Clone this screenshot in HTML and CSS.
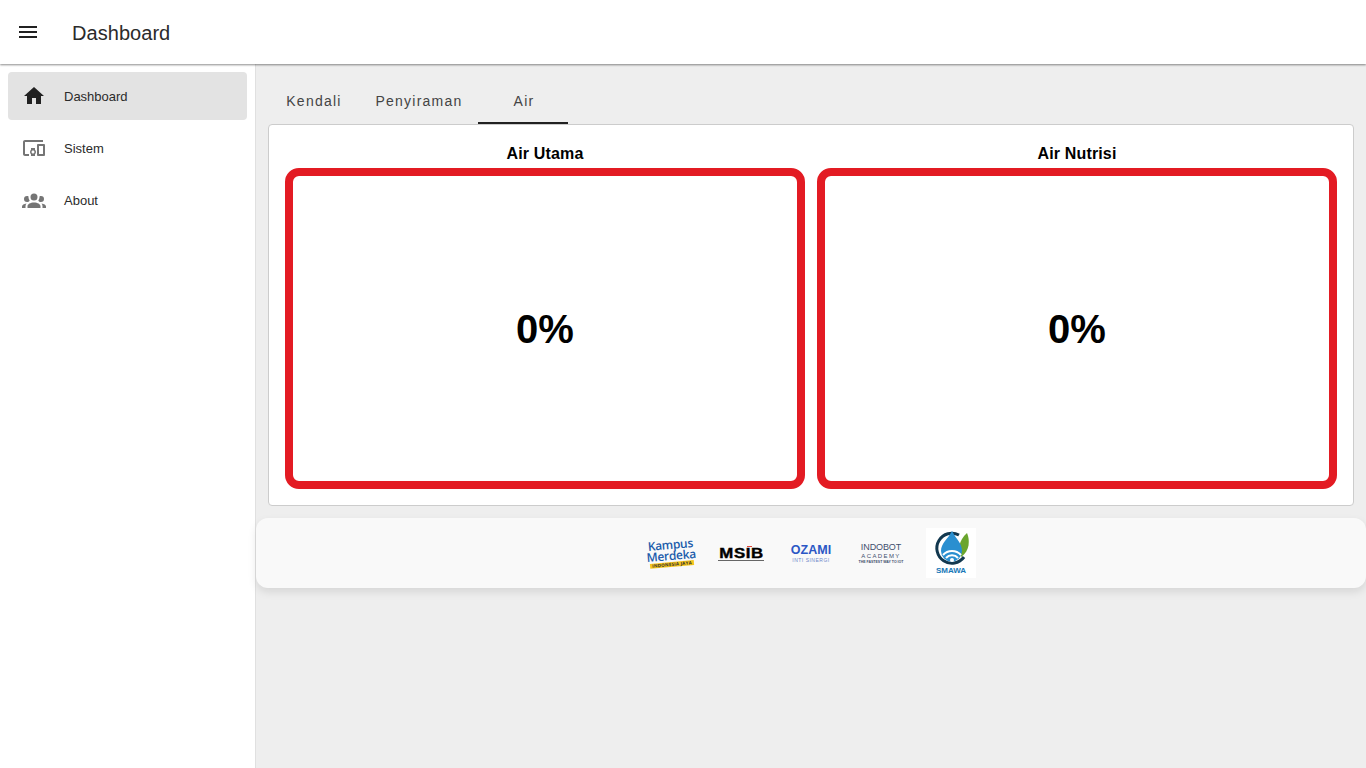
FILE: index.html
```html
<!DOCTYPE html>
<html lang="en">
<head>
  <meta charset="UTF-8" />
  <meta name="viewport" content="width=device-width, initial-scale=1.0" />
  <title>Dashboard</title>
  <link rel="stylesheet" href="styles.css">
</head>
<body>
  <header class="topbar">
    <svg class="menu-icon" viewBox="0 0 24 24" width="24" height="24"><path d="M3 18h18v-2H3v2zm0-5h18v-2H3v2zm0-7v2h18V6H3z"/></svg>
    <div class="topbar-title">Dashboard</div>
  </header>

  <div class="layout">
    <nav class="sidebar">
      <a class="nav-item active">
        <svg class="nav-icon" viewBox="0 0 24 24" width="24" height="24"><path d="M10 20v-6h4v6h5v-8h3L12 3 2 12h3v8z"/></svg>
        <span>Dashboard</span>
      </a>
      <a class="nav-item">
        <svg class="nav-icon" viewBox="0 0 24 24" width="24" height="24"><path d="M3 6h18V4H3c-1.100 0-2 .9-2 2v12c0 1.100.9 2 2 2h4v-2H3V6zm10 6H9v1.780c-.61.55-1 1.330-1 2.220s.39 1.670 1 2.220V20h4v-1.780c.61-.55 1-1.340 1-2.220s-.39-1.670-1-2.220V12zm-2 5.500c-.83 0-1.500-.67-1.500-1.500s.67-1.500 1.500-1.500 1.500.67 1.500 1.500-.67 1.500-1.500 1.500zM22 8h-6c-.5 0-1 .5-1 1v10c0 .5.500 1 1 1h6c.5 0 1-.5 1-1V9c0-.5-.5-1-1-1zm-1 10h-4v-8h4v8z"/></svg>
        <span>Sistem</span>
      </a>
      <a class="nav-item">
        <svg class="nav-icon" viewBox="0 0 24 24" width="24" height="24"><path d="M12 5.500A3.500 3.500 0 0 1 15.500 9 3.500 3.500 0 0 1 12 12.500 3.500 3.500 0 0 1 8.500 9 3.500 3.500 0 0 1 12 5.500M5 8c.56 0 1.080.15 1.530.42-.15 1.430.27 2.850 1.130 3.960C7.160 13.340 6.160 14 5 14a3 3 0 0 1-3-3 3 3 0 0 1 3-3m14 0a3 3 0 0 1 3 3 3 3 0 0 1-3 3c-1.160 0-2.160-.66-2.660-1.620.86-1.110 1.280-2.530 1.130-3.960.45-.27.97-.42 1.530-.42M5.500 18.250c0-2.070 2.910-3.750 6.500-3.750s6.500 1.680 6.500 3.750V20h-13v-1.750M0 20v-1.500c0-1.390 1.890-2.560 4.450-2.900-.59.68-.95 1.620-.95 2.650V20H0m24 0h-3.500v-1.750c0-1.030-.36-1.970-.95-2.650 2.560.34 4.450 1.510 4.450 2.900V20z"/></svg>
        <span>About</span>
      </a>
    </nav>

    <main class="content">
      <div class="tabs">
        <div class="tab tab-short">Kendali</div>
        <div class="tab tab-long">Penyiraman</div>
        <div class="tab tab-short tab-active">Air</div>
      </div>

      <section class="card">
        <div class="gauge">
          <div class="gauge-title">Air Utama</div>
          <div class="gauge-box">0%</div>
        </div>
        <div class="gauge">
          <div class="gauge-title">Air Nutrisi</div>
          <div class="gauge-box">0%</div>
        </div>
      </section>

      <footer class="partners">
        <div class="logo logo-kampus">
          <div class="km-line">Kampus</div>
          <div class="km-line">Merdeka</div>
          <div class="km-strip">INDONESIA JAYA</div>
        </div>
        <div class="logo logo-msib">
          <div class="msib-flag"></div>
          <div class="msib-mark">MSIB</div>
          <div class="msib-rule"></div>
        </div>
        <div class="logo logo-ozami">
          <div class="ozami-name">OZAMI</div>
          <div class="ozami-sub">INTI SINERGI</div>
        </div>
        <div class="logo logo-indobot">
          <div class="indobot-name">INDOBOT</div>
          <div class="indobot-sub">ACADEMY</div>
          <div class="indobot-tag">THE FASTEST WAY TO IOT</div>
        </div>
        <div class="logo logo-smawa">
          <svg viewBox="0 0 50 50" width="50" height="50">
            <path d="M33 7a15 15 0 1 0 5 22" fill="none" stroke="#12384f" stroke-width="3"/>
            <path d="M35 29c-3-7-3-16 6-24 3 7 3 18-6 24z" fill="#6aa52d"/>
            <path d="M26 3c4 8 10 12 10 20a10.500 10.500 0 0 1-21 0c0-8 7-12 11-20z" fill="#2a8fd0"/>
            <path d="M17 27a12 12 0 0 1 18 0M20 30a8 8 0 0 1 12 0" fill="none" stroke="#fff" stroke-width="2"/>
            <circle cx="26" cy="32" r="2" fill="#fff"/>
            <text x="25" y="45" text-anchor="middle" class="smawa-text">SMAWA</text>
          </svg>
        </div>
      </footer>
    </main>
  </div>
</body>
</html>
```

FILE: styles.css
```css
* {
  box-sizing: border-box;
}
body {
  margin: 0;
  height: 768px;
  overflow: hidden;
  background-color: #eeeeee;
  color: #2b2b2b;
  font-family: 'Liberation Sans', Arial, sans-serif;
}
.topbar {
  position: relative;
  z-index: 2;
  height: 64px;
  padding-left: 16px;
  display: flex;
  align-items: center;
  background-color: white;
  box-shadow: 0 1px 2px rgba(0, 0, 0, 0.45);
}
.menu-icon {
  fill: #212121;
}
.topbar-title {
  margin-left: 32px;
  padding-top: 2px;
  font-size: 20px;
  letter-spacing: 0.05px;
}
.layout {
  display: flex;
  height: 704px;
}
.sidebar {
  width: 256px;
  flex-shrink: 0;
  padding: 8px;
  display: flex;
  flex-direction: column;
  gap: 4px;
  background-color: white;
  border-right: 1px solid #e0e0e0;
}
.nav-item {
  height: 48px;
  padding-left: 14px;
  display: flex;
  align-items: center;
  gap: 18px;
  border-radius: 4px;
  font-size: 13px;
}
.nav-item.active {
  background-color: #e3e3e3;
}
.nav-icon {
  fill: #757575;
}
.active .nav-icon {
  fill: #212121;
}
.content {
  flex: 1;
  min-width: 0;
  display: flex;
  flex-direction: column;
}
.tabs {
  height: 60px;
  margin-left: 12px;
  display: flex;
  align-items: flex-end;
}
.tab {
  height: 46px;
  padding: 2px 0 0 2px;
  display: flex;
  align-items: center;
  justify-content: center;
  border-bottom: 2px solid transparent;
  font-size: 14px;
  letter-spacing: 1.25px;
  color: #444444;
}
.tab-short {
  width: 90px;
}
.tab-long {
  width: 120px;
}
.tab-active {
  border-bottom-color: #212121;
}
.card {
  height: 382px;
  padding: 16px;
  display: flex;
  gap: 12px;
  margin: 0 12px;
  background-color: white;
  border: 1px solid #cccccc;
  border-radius: 4px;
}
.gauge {
  width: 520px;
  display: flex;
  flex-direction: column;
  align-items: center;
}
.gauge-title {
  height: 27px;
  font-size: 16px;
  font-weight: bold;
  letter-spacing: 0.15px;
  line-height: 26px;
  color: black;
}
.gauge-box {
  width: 520px;
  height: 321px;
  padding-top: 2px;
  display: flex;
  align-items: center;
  justify-content: center;
  border: 8px solid #e31b23;
  border-radius: 14px;
  font-size: 40px;
  font-weight: bold;
  color: black;
}
.partners {
  height: 70px;
  margin-top: 12px;
  display: flex;
  align-items: center;
  justify-content: center;
  gap: 20px;
  background-color: #f9f9f9;
  border-radius: 12px;
  box-shadow: 0 4px 8px rgba(0, 0, 0, 0.1);
}
.logo {
  width: 50px;
  height: 50px;
  display: flex;
  flex-direction: column;
  align-items: center;
  justify-content: center;
  overflow: hidden;
  white-space: nowrap;
}
.logo-kampus {
  transform: rotate(-5deg);
  line-height: 11px;
  color: #1c5cab;
  font-family: 'Open Sans', sans-serif;
}
.km-line {
  font-size: 12px;
  font-weight: 600;
  letter-spacing: -0.3px;
}
.km-strip {
  margin-top: 1px;
  padding: 0 2px;
  background-color: #f6c51b;
  font-size: 4.500px;
  font-weight: bold;
  line-height: 5px;
  letter-spacing: 0.2px;
  color: #333333;
}
.msib-flag {
  width: 5px;
  height: 1px;
  margin-left: 16px;
  background-color: #e0483e;
}
.msib-mark {
  font-size: 14px;
  font-weight: bold;
  line-height: 13px;
  letter-spacing: 0.5px;
  transform: scaleX(1.2);
  color: black;
  -webkit-text-stroke: 0.4px black;
}
.msib-rule {
  width: 46px;
  height: 1px;
  background-color: #666666;
}
.ozami-name {
  font-size: 12.500px;
  font-weight: bold;
  line-height: 13px;
  color: #2b57c5;
}
.ozami-sub {
  font-size: 5px;
  line-height: 6px;
  letter-spacing: 0.5px;
  color: #6f88c9;
}
.logo-indobot {
  color: #3f4f6e;
}
.indobot-name {
  font-size: 9px;
  line-height: 10px;
  letter-spacing: -0.1px;
}
.indobot-sub {
  font-size: 6px;
  line-height: 8px;
  letter-spacing: 1.400px;
}
.indobot-tag {
  font-size: 3.500px;
  line-height: 4px;
  font-weight: bold;
}
.logo-smawa {
  background-color: white;
}
.smawa-text {
  font-size: 8px;
  font-weight: bold;
  fill: #1878b8;
}
```
